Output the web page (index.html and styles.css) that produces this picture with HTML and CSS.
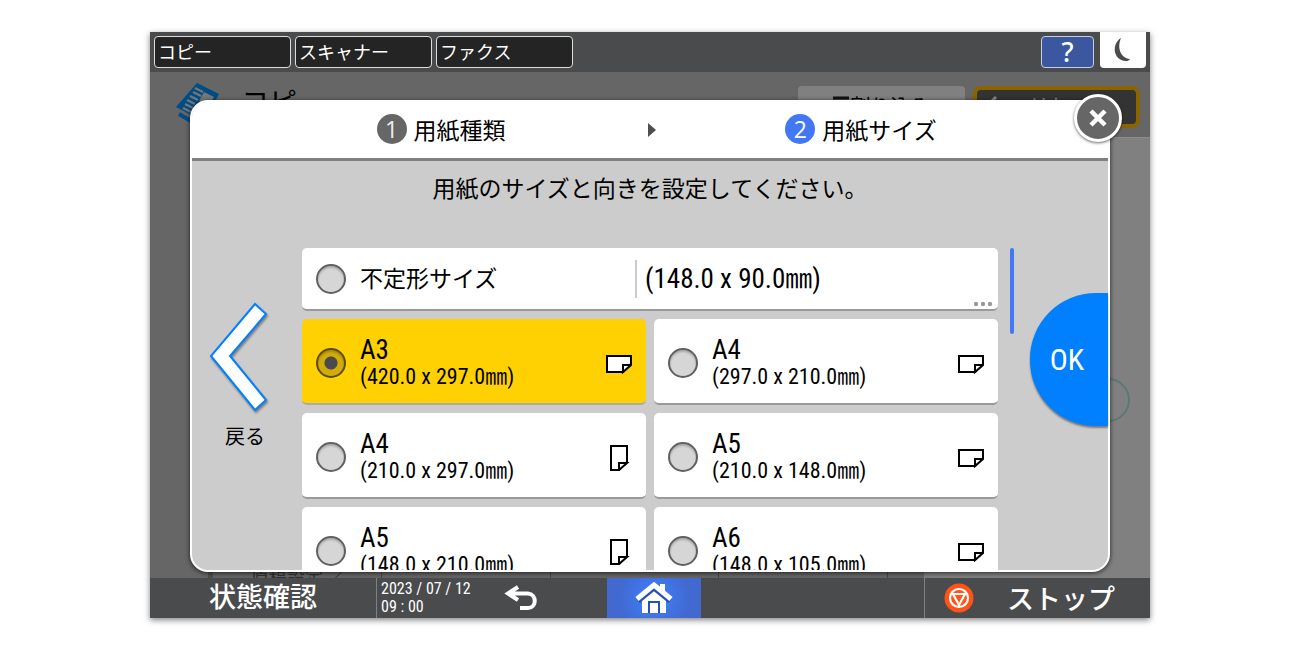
FILE: index.html
```html
<!DOCTYPE html>
<html lang="ja">
<head>
<meta charset="utf-8">
<title>用紙サイズ</title>
<link rel="stylesheet" href="styles.css">
</head>
<body>
<svg class="defs" aria-hidden="true">
  <symbol id="landscape" viewBox="0 0 28 28"><path d="M3 7H27V15L19 23H3Z" fill="#fff" stroke="#000" stroke-width="2"/><path d="M19 23V16H27Z" fill="#fff" stroke="#000" stroke-width="2"/></symbol>
  <symbol id="portrait" viewBox="0 0 28 28"><path d="M7 3H23V19L15 27H7Z" fill="#fff" stroke="#000" stroke-width="2"/><path d="M15 27V20H23Z" fill="#fff" stroke="#000" stroke-width="2"/></symbol>
</svg>
<div class="device">
  <header class="topbar">
    <nav class="tabs">
      <button class="tab">コピー</button>
      <button class="tab">スキャナー</button>
      <button class="tab">ファクス</button>
    </nav>
    <button class="help" aria-label="ヘルプ">?</button>
    <button class="sleep" aria-label="スリープ"><svg width="24" height="26" viewBox="0 0 24 26"><path d="M10 1C1 6 1 23 15 24c2 0 3-.5 4-2C9 21 6 10 10 1Z" fill="#4a4b4d"/></svg></button>
  </header>

  <main class="stage">
    <div class="behind">
      <div class="app-head">
        <svg class="app-icon" width="48" height="48" viewBox="0 0 48 48"><path d="M22 1 44 12 29 40 1 25Z" fill="#004c85"/><path d="M20 6l8 4M18 10l8 4M15 14l8 4M12 18l8 4M10 22l8 4M8 26l8 4" stroke="#777" stroke-width="2"/><path d="M29 10l10 5-5 9-10-5Z" fill="#777"/><path d="M4 32l12 7" stroke="#004c85" stroke-width="4"/></svg>
        <span class="app-title">コピー</span>
        <span class="ghost-button"><svg width="16" height="16" viewBox="0 0 16 16"><path d="M0 4H16M3 10H14" stroke="#111" stroke-width="3"/></svg>割り込み</span>
        <span class="ghost-button reset"><svg width="20" height="20" viewBox="0 0 20 20"><path d="M13 3 5 11l8 8" fill="none" stroke="#888" stroke-width="3"/></svg>リセット</span>
      </div>
      <div class="side-pane"><span class="ring"></span></div>
      <div class="settings"><span>原稿設定 ／</span><span></span><span></span><span></span></div>
    </div>

    <section class="dialog" aria-label="用紙サイズ">
      <div class="steps">
        <div class="step"><b class="num">1</b>用紙種類</div>
        <svg width="8" height="14" viewBox="0 0 8 14"><path d="M0 0 8 7 0 14Z" fill="#4f4f4f"/></svg>
        <div class="step current"><b class="num">2</b>用紙サイズ</div>
      </div>
      <div class="content">
        <p class="message">用紙のサイズと向きを設定してください。</p>
        <button class="back"><svg width="60" height="110" viewBox="0 0 60 110"><path d="M46 2 57 12 21 54 57 98 46 108 2 54Z" fill="#fff" stroke="#0080ff" stroke-width="2"/></svg>戻る</button>
        <form class="sizes">
          <label class="card wide"><input type="radio" name="size"><span class="custom">不定形サイズ</span><span class="custom-size">(148.0 x 90.0<span class="unit">㎜</span>)</span><svg class="dots" width="20" height="6" viewBox="0 0 20 6"><g fill="#999"><circle cx="3" cy="3" r="2.200"/><circle cx="10" cy="3" r="2.200"/><circle cx="17" cy="3" r="2.200"/></g></svg></label>
          <label class="card"><input type="radio" name="size" checked><span class="label">A3<small>(420.0 x 297.0<span class="unit">㎜</span>)</small></span><svg class="sheet"><use href="#landscape"/></svg></label>
          <label class="card"><input type="radio" name="size"><span class="label">A4<small>(297.0 x 210.0<span class="unit">㎜</span>)</small></span><svg class="sheet"><use href="#landscape"/></svg></label>
          <label class="card"><input type="radio" name="size"><span class="label">A4<small>(210.0 x 297.0<span class="unit">㎜</span>)</small></span><svg class="sheet"><use href="#portrait"/></svg></label>
          <label class="card"><input type="radio" name="size"><span class="label">A5<small>(210.0 x 148.0<span class="unit">㎜</span>)</small></span><svg class="sheet"><use href="#landscape"/></svg></label>
          <label class="card"><input type="radio" name="size"><span class="label">A5<small>(148.0 x 210.0<span class="unit">㎜</span>)</small></span><svg class="sheet"><use href="#portrait"/></svg></label>
          <label class="card"><input type="radio" name="size"><span class="label">A6<small>(148.0 x 105.0<span class="unit">㎜</span>)</small></span><svg class="sheet"><use href="#landscape"/></svg></label>
        </form>
        <div class="scrollbar"></div>
        <button class="ok">OK</button>
      </div>
      <button class="close" aria-label="閉じる"><svg width="20" height="20" viewBox="0 0 20 20"><path d="M3 3 17 17M17 3 3 17" stroke="#fff" stroke-width="4.500"/></svg></button>
    </section>
  </main>

  <footer class="bottombar">
    <button class="status">状態確認</button>
    <time class="clock" datetime="2023-07-12T09:00">2023 / 07 / 12<br>09 : 00</time>
    <button class="return" aria-label="戻る"><svg width="34" height="26" viewBox="0 0 34 26"><path d="M14 2 4 8.500 14 15M5 8.500H24C33 9 33 23 24 23H16" fill="none" stroke="#fff" stroke-width="4"/></svg></button>
    <button class="home" aria-label="ホーム"><svg width="38" height="32" viewBox="0 0 38 32"><path d="M25 2h5v11h-5Z" fill="#fff"/><path d="M19 7 31 17V31H7V17Z" fill="#fff"/><path d="M3 19 19 6 35 19" fill="none" stroke="#2450b8" stroke-width="5"/><path d="M2 17 19 3 36 17" fill="none" stroke="#fff" stroke-width="5"/><path d="M14 31V20H24V31" fill="#fff" stroke="#2450b8" stroke-width="2"/></svg></button>
    <button class="stop"><svg width="30" height="30" viewBox="0 0 30 30"><circle cx="15" cy="15" r="14.500" fill="#ff5318"/><circle cx="15" cy="15" r="9" fill="none" stroke="#fff" stroke-width="2.200"/><path d="M9 11H21L15 22Z" fill="none" stroke="#fff" stroke-width="2.200"/></svg>ストップ</button>
  </footer>
</div>
</body>
</html>
```

FILE: styles.css
```css
* { box-sizing: border-box; }

body {
  margin: 0;
  height: 100vh;
  padding: 32px 150px;
  background: #fff;
  color: #000;
  font-family: "Noto Sans CJK JP", sans-serif;
  font-size: 24px;
}

button {
  padding: 0;
  border: 0;
  background: none;
  color: inherit;
  font: inherit;
}

svg { display: block; flex: none; }
.defs { position: absolute; width: 0; height: 0; }

.device {
  display: flex;
  flex-direction: column;
  height: calc(100vh - 64px);
  background: #666;
  box-shadow: 0 2px 6px rgba(0, 0, 0, .5);
}

.topbar {
  display: flex;
  gap: 6px;
  height: 40px;
  padding: 0 4px;
  background: #4a4b4d;
  flex: none;
}

.tabs { display: flex; gap: 4px; flex: 1; padding-top: 4px; }

.tab {
  width: 137px;
  height: 32px;
  padding: 0 3px 2px;
  border: 1px solid #ddd;
  border-radius: 4px;
  background: #242424;
  color: #fff;
  font-size: 18px;
  line-height: 28px;
  text-align: left;
}

.help {
  width: 53px;
  height: 32px;
  margin-top: 4px;
  border: 1px solid #c8cee0;
  border-radius: 4px;
  background: #3a57a0;
  color: #fff;
  font-family: "Noto Sans", sans-serif;
  font-size: 27px;
  font-weight: 500;
  line-height: 28px;
}

.sleep {
  display: flex;
  align-items: center;
  justify-content: center;
  width: 46px;
  height: 36px;
  border-radius: 0 0 4px 4px;
  background: #fff;
}

.stage { position: relative; flex: 1; min-height: 0; }

.behind {
  display: flex;
  flex-direction: column;
  height: 100%;
  color: #000;
  overflow: hidden;
}

.app-head {
  display: flex;
  align-items: flex-start;
  gap: 8px;
  height: 65px;
  padding: 14px 10px 0 25px;
}

.app-icon { margin-top: -4px; }
.app-title { flex: 1; padding-left: 10px; font-size: 28px; line-height: 30px; }

.ghost-button {
  display: flex;
  align-items: flex-start;
  justify-content: center;
  gap: 2px;
  width: 167px;
  height: 42px;
  padding-top: 8px;
  border-radius: 4px;
  background: #808080;
  font-size: 20px;
  line-height: 24px;
}

.reset {
  justify-content: flex-start;
  gap: 26px;
  padding: 4px 6px;
  border: 4px solid #8a6400;
  border-radius: 8px;
  background: #333;
  color: #888;
  font-size: 20px;
}

.side-pane {
  flex: 1;
  width: 226px;
  margin-left: auto;
  padding: 240px 20px 0;
  border-top: 1px solid #8c8c8c;
  background: #808080;
}

.ring {
  display: block;
  width: 44px;
  height: 44px;
  margin-left: auto;
  border: 2px solid #567a76;
  border-radius: 50%;
}

.settings {
  display: flex;
  height: 24px;
  margin: -24px 262px 0 58px;
  border-left: 5px solid #505050;
  font-size: 18px;
  line-height: 20px;
  color: #333;
}

.settings span { flex: 1; padding: 12px 0 0 38px; border-right: 1px solid #484848; }

.dialog {
  position: absolute;
  inset: 28px 40px 6px;
  display: flex;
  flex-direction: column;
  border: 2px solid #fff;
  border-radius: 18px;
  background: #ccc;
  box-shadow: 0 1px 5px rgba(0, 0, 0, .7);
}

.steps {
  display: grid;
  grid-template-columns: 1fr 8px 1fr;
  align-items: center;
  height: 59px;
  padding-left: 4px;
  border-bottom: 3px solid #808080;
  border-radius: 16px 16px 0 0;
  background: #fff;
  flex: none;
}

.step {
  display: flex;
  align-items: center;
  justify-content: center;
  gap: 7px;
  padding: 0 0 2px 38px;
  font-size: 23px;
  line-height: 26px;
}

.current { padding: 0 42px 2px 0; }

.num {
  width: 30px;
  height: 30px;
  border-radius: 50%;
  background: #666;
  color: #eee;
  font-family: "Open Sans", sans-serif;
  font-size: 23px;
  font-weight: 400;
  line-height: 30px;
  text-align: center;
}

.current .num { background: #4278f5; color: #fff; }

.content {
  display: grid;
  grid-template-columns: 110px 1fr 32px 78px;
  grid-template-rows: 87px 1fr;
  flex: 1;
  min-height: 0;
}

.message {
  grid-column: 1 / -1;
  margin: 0;
  padding-top: 8px;
  font-size: 23px;
  line-height: 36px;
  text-align: center;
}

.back {
  display: flex;
  flex-direction: column;
  align-items: center;
  align-self: start;
  gap: 10px;
  padding: 54px 4px 0 0;
  font-size: 20px;
  line-height: 28px;
}

.back svg { margin-right: 12px; filter: drop-shadow(1px 2px 1px rgba(0, 0, 0, .4)); }

.sizes {
  display: grid;
  grid-template-columns: 1fr 1fr;
  grid-auto-rows: 86px;
  grid-template-rows: 63px;
  gap: 8px;
  overflow: hidden;
}

.card {
  display: flex;
  align-items: center;
  padding: 4px 14px 0;
  border-bottom: 2px solid #999;
  border-radius: 5px;
  background: #fff;
}

.card:has(input:checked) { background: #ffd102; border-bottom-color: #aaa; }
.wide { grid-column: 1 / -1; padding: 0 5px 0 14px; }

.card input {
  appearance: none;
  flex: none;
  width: 30px;
  height: 30px;
  margin: 0 14px 0 0;
  border: 2px solid #606060;
  border-radius: 50%;
  background: #d6d6d6;
  box-shadow: inset 0 2px 2px rgba(0, 0, 0, .2);
}

.card input:checked {
  border-color: #5c4c00;
  background: radial-gradient(circle, #4a4a4a 6px, #d0ac0e 7px);
}

.label, .custom-size, .ok, .clock {
  font-family: "Liberation Sans Narrow", "Roboto Condensed", "Noto Sans CJK JP", sans-serif;
  font-weight: 400;
}

.label { flex: 1; font-size: 27px; line-height: 26px; }
.label small { display: block; font-size: 22px; line-height: 24px; }
.unit { font-family: "Noto Sans CJK JP", sans-serif; line-height: 1; }
.sheet { width: 28px; height: 28px; }
.custom { flex: 1; padding-bottom: 4px; font-size: 23px; line-height: 30px; }

.custom-size {
  width: 358px;
  padding-left: 8px;
  border-left: 2px solid #ccc;
  font-size: 27px;
  line-height: 38px;
}

.dots { align-self: flex-end; margin: 0 0 2px -20px; }

.scrollbar {
  width: 4px;
  height: 86px;
  margin-left: 12px;
  border-radius: 2px;
  background: #4278f5;
}

.ok {
  height: 133px;
  margin-top: 45px;
  padding-right: 4px;
  border-radius: 66px 0 0 66px;
  background: #0080ff;
  box-shadow: 0 2px 2px rgba(0, 0, 0, .4);
  color: #fff;
  font-size: 30px;
}

.close {
  position: absolute;
  top: -8px;
  right: -14px;
  display: flex;
  align-items: center;
  justify-content: center;
  width: 48px;
  height: 48px;
  border: 3px solid #fff;
  border-radius: 50%;
  background: #666;
  box-shadow: 0 1px 3px rgba(0, 0, 0, .6);
}

.bottombar {
  display: grid;
  grid-template-columns: 226px 132px 99px 94px 1fr 226px;
  height: 40px;
  background: #4a4b4d;
  color: #fff;
  flex: none;
}

.status { padding-bottom: 4px; font-size: 27px; font-weight: 500; line-height: 36px; }

.clock {
  padding: 2px 4px;
  border-left: 1px solid #808080;
  font-size: 16px;
  line-height: 18px;
}

.return, .home { display: flex; align-items: center; }
.return { margin-left: -4px; }
.home { justify-content: center; background: radial-gradient(circle, #4080ff, #4169d0 70%); }

.stop {
  grid-column: 6;
  display: flex;
  align-items: center;
  gap: 33px;
  padding-left: 19px;
  border-left: 1px solid #808080;
  font-size: 27px;
  font-weight: 500;
  line-height: 36px;
}
```
